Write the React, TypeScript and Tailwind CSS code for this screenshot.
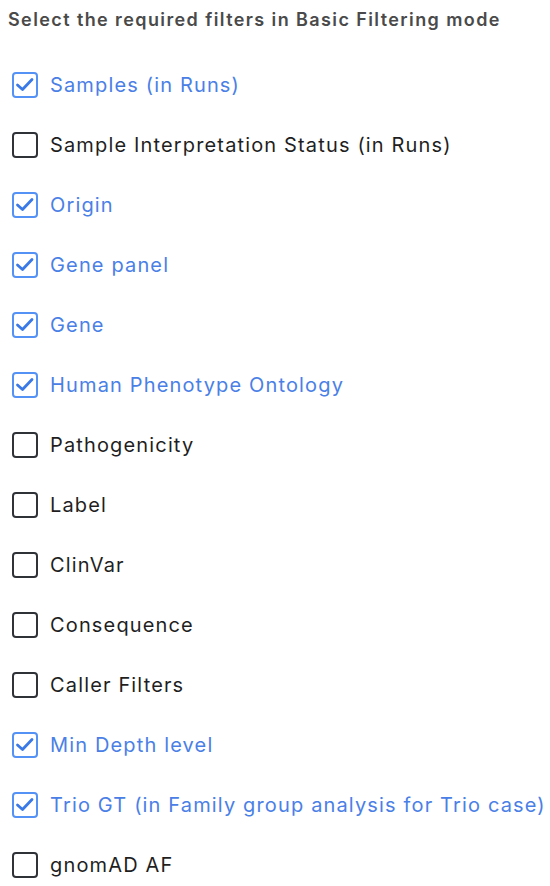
import React from "react";

const items: [string, boolean][] = [
  ["Samples (in Runs)", true],
  ["Sample Interpretation Status (in Runs)", false],
  ["Origin", true],
  ["Gene panel", true],
  ["Gene", true],
  ["Human Phenotype Ontology", true],
  ["Pathogenicity", false],
  ["Label", false],
  ["ClinVar", false],
  ["Consequence", false],
  ["Caller Filters", false],
  ["Min Depth level", true],
  ["Trio GT (in Family group analysis for Trio case)", true],
  ["gnomAD AF", false],
];

export default function App() {
  return (
    <div className="w-[550px] h-[886px] bg-white overflow-hidden" style={{ fontFamily: "Inter, 'Noto Sans', sans-serif" }}>
      <div className="pl-[8px] pt-[8px] h-[24px] text-[18px] leading-[24px] font-semibold tracking-[1.4px] text-[#4a4a4a] whitespace-nowrap">
        Select the required filters in Basic Filtering mode
      </div>
      <div className="flex flex-col pl-[12px] pt-[31px]">
        {items.map(([label, checked]) => (
          <div key={label} className="flex items-center h-[60px] gap-[12px]">
            {checked ? (
              <div className="w-[26px] h-[26px] rounded-[4px] border-2 border-[#5592f5] flex">
                <svg width="22" height="22" viewBox="0 0 22 22" fill="none">
                  <path d="M3.5 11 L8.5 15.5 L18 5.5" stroke="#3a7ae6" strokeWidth="2.8" strokeLinecap="round" strokeLinejoin="round" />
                </svg>
              </div>
            ) : (
              <div className="w-[26px] h-[26px] rounded-[4px] border-2 border-[#2f3237]" />
            )}
            <span className={`text-[20px] tracking-[1.15px] whitespace-nowrap ${checked ? "text-[#4a80e6]" : "text-[#1f1f1f]"}`}>
              {label}
            </span>
          </div>
        ))}
      </div>
    </div>
  );
}
